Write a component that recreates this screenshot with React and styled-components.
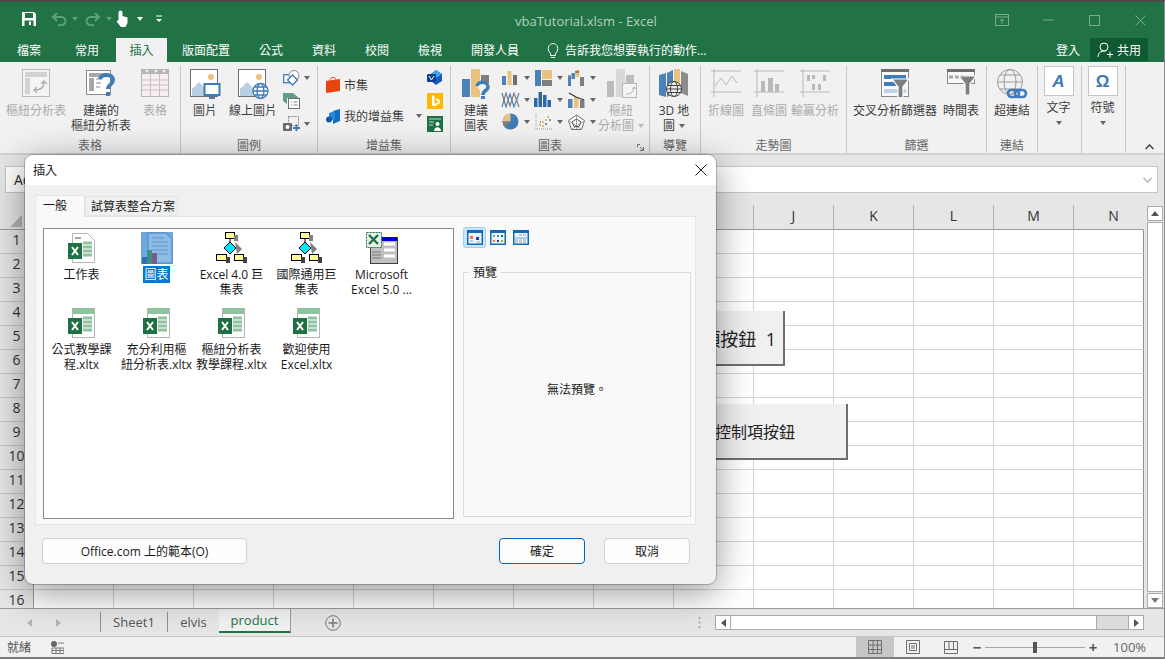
import styled, { createGlobalStyle } from "styled-components"

const GlobalStyle = createGlobalStyle`
    html, body { margin: 0; padding: 0; background: #fff; }
    * { box-sizing: border-box; }
    body { font-family: "Open Sans", "Noto Sans CJK TC", sans-serif; font-size: 12px; color: #262626; }
`

const Ico = ({ w, h = w, vw = w, vh = h, children }) => <svg width={w} height={h} viewBox={`0 0 ${vw} ${vh}`} preserveAspectRatio="none" style={{ display: 'block', flex: 'none' }}>{children}</svg>

/* ---------- ribbon icons ---------- */
const PivotIco = () => <Ico w={28}>
    <rect x=".5" y=".5" width="27" height="27" fill="#f4f4f4" stroke="#b9b9b9" />
    <rect x="3" y="3" width="22" height="5" fill="#d2d2d2" /><rect x="3" y="9" width="5" height="16" fill="#d2d2d2" />
    <path d="M13 21c6 0 9-3 9-8M19 15l3-3 3 3M15 18l-3 3 3 3" fill="none" stroke="#b0b0b0" strokeWidth="1.4" />
</Ico>
const SuggestPivotIco = () => <Ico w={30}>
    <rect x=".5" y="1.5" width="24" height="24" fill="#fff" stroke="#8a8a8a" />
    <rect x="3" y="4" width="19" height="4" fill="#a6a6a6" /><rect x="3" y="9" width="5" height="13" fill="#a6a6a6" />
    <path d="M10 10h6M10 14h5M10 18h4" stroke="#c4c4c4" strokeWidth="2" />
    <path d="M14 10c1-5 13-6 13 1 0 5-5 4-5 9" fill="none" stroke="#3f7cb8" strokeWidth="4" />
    <rect x="20" y="23" width="4" height="4" fill="#3f7cb8" />
</Ico>
const TableIco = () => <Ico w={28}>
    <rect x=".5" y=".5" width="27" height="27" fill="#f6eef2" stroke="#b9b4b7" />
    <rect x="0" y="0" width="28" height="5" fill="#b5b5b5" />
    <path d="M1 11h26M1 16h26M1 21h26M9.5 5v22M18.5 5v22" stroke="#c9bfc5" />
    <path d="M4 1l2 3 2-3zM13 1l2 3 2-3zM21 1l2 3 2-3z" fill="#eee" />
</Ico>
const PictureIco = ({ badge }) => <Ico w={31} h={32}>
    <rect x=".5" y=".5" width="27" height="27" fill="#fff" stroke="#6f6f6f" />
    <circle cx="21" cy="8" r="3" fill="#edc07c" />
    <path d="M2 27V20l7-7 7 7 5 7z" fill="#b8cfe4" />
    {badge === 'screen' && <g><rect x="14.5" y="15" width="15" height="11" fill="#fff" stroke="#3f7cb8" strokeWidth="2" /><path d="M19 29h6" stroke="#3f7cb8" strokeWidth="2" /></g>}
    {badge === 'globe' && <g fill="#fff" stroke="#3f7cb8" strokeWidth="1.3"><circle cx="22.5" cy="22" r="7.5" /><ellipse cx="22.5" cy="22" rx="3.4" ry="7.5" /><path d="M15 22h15M16 18h13M16 26h13" /></g>}
</Ico>
const ShapesIco = () => <Ico w={17} h={16} vw={17} vh={16}>
    <rect x=".7" y="4.700" width="10" height="8" fill="#fff" stroke="#3f7cb8" strokeWidth="1.3" />
    <circle cx="11" cy="5.500" r="5" fill="#fff" stroke="#8a8a8a" />
    <path d="M4.500 10l5-5 5 5-5 5z" fill="#fff" stroke="#3f7cb8" strokeWidth="1.3" />
</Ico>
const SmartArtIco = () => <Ico w={17} h={17}>
    <path d="M0 1h10l6 5H4v6l-4-3z" fill="#5f9e85" />
    <rect x="5.500" y="6.500" width="11" height="10" fill="#fff" stroke="#707070" />
    <path d="M8 10h1M10.500 10h4M8 13h1M10.500 13h4" stroke="#808080" />
</Ico>
const ScreenshotIco = () => <Ico w={17} h={15}>
    <rect x="5.500" y=".5" width="10" height="9" fill="none" stroke="#8a8a8a" strokeDasharray="2 1" />
    <rect x="0" y="7" width="9" height="8" rx="1" fill="#6b6b6b" /><circle cx="4.500" cy="11" r="2" fill="#fff" />
    <path d="M10 12h7M13.500 8.500v6.500" stroke="#3f7cb8" strokeWidth="2" />
</Ico>
const StoreIco = () => <Ico w={15} h={16}>
    <path d="M0 4l14-2v12L0 16z" fill="#e8440f" /><path d="M4 4c0-5 6-5 6 0" fill="none" stroke="#e8440f" />
</Ico>
const AddinIco = () => <Ico w={15} h={15}>
    <path d="M7 2l7-2v12l-7 3z" fill="#0f6fc6" /><path d="M3 4l6-2v9H3z" fill="#2b88d8" /><circle cx="3" cy="10.5" r="3" fill="#0f5aa8" />
</Ico>
const VisioIco = () => <Ico w={16} h={15}>
    <path d="M9 0l6 4v7l-6 4-5-4V4z" fill="#185abd" /><path d="M9 0l6 4-6 4-5-4z" fill="#41a5ee" />
    <rect x="0" y="4" width="9" height="8" rx="1" fill="#103f91" /><path d="M2 6l2.4 4L7 6" fill="none" stroke="#fff" />
</Ico>
const BingIco = () => <Ico w={16} h={16}>
    <rect width="16" height="16" fill="#ffb900" />
    <path d="M5 2l2.6 1v8l4-2-2-1-1-3 4.4 2v3l-5.4 3.4L5 12z" fill="#fff" />
</Ico>
const PeopleIco = () => <Ico w={16} h={16}>
    <rect width="16" height="16" fill="#1e7145" /><path d="M2 3h12M2 6h5M2 9h4" stroke="#bcdccb" />
    <circle cx="10.5" cy="8" r="2" fill="#fff" /><path d="M7 15c0-5 7-5 7 0z" fill="#fff" />
</Ico>
const SuggestChartIco = () => <Ico w={28} h={30}>
    <rect x="0" y="10" width="8" height="18" fill="#4d82b8" /><rect x="9" y="0" width="9" height="28" fill="#e9c27f" />
    <rect x="19" y="6" width="8" height="8" fill="#7f7f7f" />
    <path d="M15 17c1-5 11-5 11 1 0 4-5 3-5 8" fill="#f1f1f1" stroke="#3f7cb8" strokeWidth="3.5" />
    <rect x="19" y="27" width="4" height="3" fill="#3f7cb8" />
</Ico>
const Bars = ({ a = '#4d82b8', b = '#e9c27f', c = '#6e6e6e' }) => <Ico w={18} h={15}>
    <rect x="1" y="6" width="4" height="9" fill={a} /><rect x="6.5" y="1" width="4" height="14" fill={b} /><rect x="12" y="5" width="4" height="10" fill={c} />
</Ico>
const Treemap = () => <Ico w={17} h={16}>
    <rect y="0" width="6" height="16" fill="#4d82b8" /><rect x="7" width="10" height="9" fill="#e9c27f" /><rect x="7" y="10" width="10" height="6" fill="#7f7f7f" />
</Ico>
const Waterfall = () => <Ico w={17} h={16}>
    <rect y="7" width="3" height="9" fill="#4d82b8" /><rect x="3.500" y="3" width="3.500" height="6" fill="#4d82b8" /><rect x="7.500" y="0" width="4" height="7" fill="#e9c27f" /><rect x="12" y="7" width="4" height="9" fill="#7f7f7f" />
    <path d="M0 6h3M7 2h4" stroke="#333" />
</Ico>
const LineChart = () => <Ico w={19} h={16}>
    <path d="M1 1l4 14 4-13 4 13 5-14" fill="none" stroke="#4d82b8" strokeWidth="1.2" />
    <path d="M1 15l4-14 4 13 4-13 5 14" fill="none" stroke="#7f7f7f" strokeWidth="1.2" />
</Ico>
const Histogram = () => <Ico w={18} h={15}>
    <rect y="6" width="3.5" height="9" fill="#2f68a5" /><rect x="4.5" y="0" width="3.5" height="15" fill="#2f68a5" /><rect x="9" y="3" width="3.5" height="12" fill="#2f68a5" /><rect x="13.5" y="8" width="3.5" height="7" fill="#2f68a5" />
</Ico>
const Combo = () => <Ico w={17} h={16}>
    <rect x="0" y="7" width="4.500" height="9" fill="#4d82b8" /><rect x="6" y="5" width="4.500" height="11" fill="#e9c27f" /><rect x="12" y="8" width="4.500" height="8" fill="#7f7f7f" />
    <path d="M1 1l7 4 8 3" fill="none" stroke="#333" strokeWidth="1.2" />
</Ico>
const Pie = () => <Ico w={17} h={17}>
    <circle cx="8.5" cy="8.5" r="8" fill="#3f7cb8" /><path d="M8.5 8.5V.5a8 8 0 0 0-8 8z" fill="#e9c27f" /><path d="M8.5 8.5H.5a8 8 0 0 0 3 6z" fill="#7f7f7f" />
</Ico>
const Scatter = () => <Ico w={17} h={16}>
    <path d="M1 0v15h16" fill="none" stroke="#9a9a9a" strokeDasharray="1 1" />
    <path d="M4 11h2M7 8h2M10 6h2M7 12h2M12 3h2" stroke="#e0a94c" strokeWidth="1.5" /><path d="M5 8h1M10 10h2M14 6h2" stroke="#3f7cb8" strokeWidth="1.5" />
</Ico>
const Radar = () => <Ico w={17} h={16}>
    <path d="M8.500 1l8 5.500-3 9h-10l-3-9z" fill="#fff" stroke="#6e6e6e" /><path d="M8.500 1v14M.5 6.500l13 9M16.500 6.500l-13 9" stroke="#a0a0a0" />
    <path d="M8.500 5l4.500 3-2 4.500H6L4 8z" fill="none" stroke="#555" />
</Ico>
const PivotChartIco = () => <Ico w={31}>
    <rect x="1" y="12" width="7" height="16" fill="#bcbcbc" /><rect x="10" y="0" width="9" height="28" fill="#d8d8d8" /><rect x="20" y="6" width="8" height="8" fill="#bcbcbc" />
    <rect x="16.5" y="14.5" width="14" height="14" fill="#f4f4f4" stroke="#b9b9b9" />
    <path d="M20 25c5 0 8-2 8-7M26 20l2-2 2 2" fill="none" stroke="#b0b0b0" />
</Ico>
const MapIco = () => <Ico w={30}>
    <path d="M0 6l7-2v24l-7-2z" fill="#4d82b8" /><path d="M8 4l6-3v24l-6 3z" fill="#4d82b8" /><path d="M15 0h6v24h-6z" fill="#e9c27f" /><path d="M22 2l7 3v22l-7-3z" fill="#8c8c8c" />
    <g fill="#f1f1f1" stroke="#404040"><circle cx="15" cy="20" r="7.5" /><ellipse cx="15" cy="20" rx="3.5" ry="7.5" /><path d="M8 20h14M9 16.5h12M9 23.5h12" /></g>
</Ico>
const SparkFrame = ({ children }) => <Ico w={31} h={28}>
    <path d="M3 0v28M0 2h30M0 23h30" stroke="#b9b9b9" />{children}
</Ico>
const FilterFunnel = ({ x, y }) => <g transform={`translate(${x} ${y})`}>
    <path d="M0 0h17l-6 8v11h-5V8z" fill="#7f7f7f" stroke="#fff" strokeWidth="1.2" />
</g>
const SlicerIco = () => <Ico w={28}>
    <rect x=".5" y=".5" width="27" height="27" fill="#f8f8f8" stroke="#8a8a8a" /><rect width="28" height="3" fill="#6e6e6e" />
    <rect x="3" y="6" width="22" height="4" fill="#3f7cb8" /><rect x="3" y="13" width="14" height="4" fill="#3f7cb8" /><rect x="3" y="20" width="22" height="4" fill="#bcd2e8" />
    <FilterFunnel x={11} y={10} />
</Ico>
const TimelineIco = () => <Ico w={29} h={26}>
    <rect x=".5" y=".5" width="27" height="14" fill="#f8f8f8" stroke="#8a8a8a" /><rect width="28" height="3" fill="#6e6e6e" />
    <path d="M2 8h4M8 8h4" stroke="#a6a6a6" strokeWidth="3" /><path d="M13 8h4" stroke="#3f7cb8" strokeWidth="3" /><path d="M19 8h3M23 8h3" stroke="#a6a6a6" strokeWidth="3" />
    <FilterFunnel x={12} y={7} />
</Ico>
const LinkIco = () => <Ico w={32} h={31}>
    <g fill="none" stroke="#9a9a9a"><circle cx="14" cy="13" r="12.5" /><ellipse cx="14" cy="13" rx="6" ry="12.5" /><path d="M2 13h24M4 6h20M4 20h20" /></g>
    <g fill="none" stroke="#3f7cb8" strokeWidth="2.6"><rect x="12" y="21" width="11" height="7" rx="3.5" /><rect x="19" y="21" width="11" height="7" rx="3.5" /></g>
</Ico>

/* ---------- dialog icons ---------- */
const XBlock = ({ x = 0, y = 10 }) => <g>
    <rect x={x} y={y} width="14" height="16" fill="#1e7145" />
    <path d={`M${x + 4} ${y + 4}l6 8m0-8l-6 8`} stroke="#fff" strokeWidth="2" />
</g>
const SheetFile = () => <Ico w={32}>
    <path d="M6.5 1.500h15l7 7v22h-22z" fill="#fff" stroke="#b5b5b5" />
    <path d="M9 6h6" stroke="#a6a6a6" strokeWidth="2" />
    <path d="M17 11h9M17 15h9M17 19h9M17 23h9" stroke="#8fc3a0" strokeWidth="3" />
    <XBlock x={2} y={11} />
</Ico>
const TemplateFile = () => <Ico w={32}>
    <rect x="6.500" y="1.500" width="22" height="29" fill="#fff" stroke="#b5b5b5" />
    <rect x="7" y="1" width="21" height="6" fill="#8fc3a0" />
    <path d="M17 11h9M17 15h9M17 19h9M17 23h9" stroke="#8fc3a0" strokeWidth="3" />
    <XBlock x={2} y={11} />
</Ico>
const ChartFile = () => <Ico w={32}>
    <rect width="32" height="32" fill="#6ea8dc" />
    <path d="M7 1h18l6 6v24H7z" fill="#8cbbe6" stroke="#4c86bd" />
    <path d="M11 6h12M11 10h16M11 14h16M11 18h16M16 22h11" stroke="#5f97cc" />
    <rect x="1" y="25" width="5" height="7" fill="#2f6fb0" /><rect x="6" y="18" width="5" height="14" fill="#3f8f86" /><rect x="11" y="21" width="5" height="11" fill="#7c5b86" />
</Ico>
const MacroFile = () => <Ico w={32}>
    <rect x="9.500" y=".5" width="9" height="6" fill="#ffff99" stroke="#000" /><rect x="18" y="3" width="4" height="6" fill="#808080" />
    <path d="M14 7v3" stroke="#000" />
    <path d="M14 10l6 6-6 6-6-6z" fill="#00e5ff" stroke="#000" /><path d="M19 10l7 7-5 5-1-6z" fill="#808080" />
    <rect x=".5" y="22.500" width="10" height="6" fill="#ffff99" stroke="#000" /><rect x="10" y="25" width="4" height="6" fill="#404040" />
    <rect x="18.500" y="22.500" width="9" height="6" fill="#ffff99" stroke="#000" /><rect x="27" y="25" width="4" height="6" fill="#404040" />
</Ico>
const DialogFile = () => <Ico w={32}>
    <rect x="4.500" y="5.500" width="27" height="26" fill="#c0c0c0" stroke="#404040" />
    <rect x="5" y="5" width="26" height="4" fill="#0000e0" />
    <path d="M18 12h11M18 18h11M18 24h11" stroke="#fff" strokeWidth="3" />
    <path d="M6 20h9M6 23h9M6 26h9" stroke="#777" />
    <rect x=".5" y=".5" width="15" height="15" fill="#e8f0e8" stroke="#1e7145" strokeDasharray="2 1" />
    <path d="M3 3l9 9m0-9l-9 9" stroke="#1e7145" strokeWidth="2.4" />
</Ico>
const ViewIco = ({ children }) => <Ico w={16} h={15}>
    <rect x=".75" y=".75" width="14.500" height="13.500" fill="#eef4fb" stroke="#0f6cbd" strokeWidth="1.500" /><rect width="16" height="3" fill="#0f6cbd" />{children}
</Ico>

/* ---------- data ---------- */
const ribbonTabs = [['檔案', 58], ['常用', 58], ['插入', 51, true], ['版面配置', 78], ['公式', 52], ['資料', 54], ['校閱', 52], ['檢視', 54], ['開發人員', 76]]
// the dialog covers the headers up to column I, only the rest shows a letter
const columns = ['', '', '', '', '', '', '', '', '', '', 'J', 'K', 'L', 'M', 'N']
const rows = Array.from({ length: 16 }, (_, i) => i + 1)
const chartIcons = [Bars, Treemap, Waterfall, LineChart, Histogram, Combo, Pie, Scatter, Radar]
const templates = [
    { icon: SheetFile, label: '工作表' },
    { icon: ChartFile, label: '圖表', selected: true },
    { icon: MacroFile, label: 'Excel 4.0 巨\n集表' },
    { icon: MacroFile, label: '國際通用巨\n集表' },
    { icon: DialogFile, label: 'Microsoft\nExcel 5.0 ...' },
    { icon: TemplateFile, label: '公式教學課\n程.xltx' },
    { icon: TemplateFile, label: '充分利用樞\n紐分析表.xltx' },
    { icon: TemplateFile, label: '樞紐分析表\n教學課程.xltx' },
    { icon: TemplateFile, label: '歡迎使用\nExcel.xltx' },
]

export default function App() {
    return (
        <Window>
            <GlobalStyle />
            <TitleBar>
                <Qat>
                    <QatItem $left={21}><Ico w={16}><path d="M1 1h12l2 2v12H1z" fill="#fff" /><rect x="4" y="2" width="8" height="5" fill="#217346" /><rect x="3.500" y="9.500" width="9" height="5.500" fill="#217346" /><rect x="8" y="10.500" width="2" height="3.500" fill="#fff" /></Ico></QatItem>
                    <QatItem $left={14}><Ico w={16}><path d="M6 2L2 6l4 4M2 6h8c6 0 6 8 0 8H7" fill="none" stroke="#5f9e7c" strokeWidth="2" /></Ico></QatItem>
                    <QatItem $left={5}><MiniCaret $left={0} $color="#5f9e7c" /></QatItem>
                    <QatItem $left={7}><Ico w={16}><path d="M10 2l4 4-4 4M14 6H6c-6 0-6 8 0 8h3" fill="none" stroke="#5f9e7c" strokeWidth="2" /></Ico></QatItem>
                    <QatItem $left={5}><MiniCaret $left={0} $color="#5f9e7c" /></QatItem>
                    <QatItem $left={3}><Ico w={15} h={18}><path d="M3.500 7V2.500a2 2 0 0 1 4 0V6l5 1.500V13l-2 4H6L1.500 11.500 3.500 10z" fill="#fff" /></Ico></QatItem>
                    <QatItem $left={7}><MiniCaret $left={0} $color="#fff" /></QatItem>
                    <QatItem $left={12}><Ico w={8} h={10}><path d="M1 2h6" stroke="#fff" /><path d="M1 5h6l-3 3z" fill="#fff" /></Ico></QatItem>
                </Qat>
                <DocTitle>vbaTutorial.xlsm - Excel</DocTitle>
                <WinControls>
                    <WinBtn><Ico w={14} h={12}><rect x=".5" y=".5" width="13" height="11" fill="none" stroke="#7aa98f" /><path d="M1 3h12M7 10V5M5 7l2-2 2 2" fill="none" stroke="#7aa98f" /></Ico></WinBtn>
                    <WinBtn><Ico w={11} h={2}><path d="M0 1h11" stroke="#7aa98f" /></Ico></WinBtn>
                    <WinBtn><Ico w={11}><rect x=".5" y=".5" width="10" height="10" fill="none" stroke="#7aa98f" /></Ico></WinBtn>
                    <WinBtn><Ico w={11}><path d="M.5.500l10 10m0-10l-10 10" stroke="#7aa98f" /></Ico></WinBtn>
                </WinControls>
            </TitleBar>

            <TabBar>
                {ribbonTabs.map(([name, w, active]) => <TabItem key={name} $w={w} $active={active}>{name}</TabItem>)}
                <TellMe>
                    <Ico w={12} h={15}><path d="M3.500 10.500C-1 6 2 .5 6 .5s7 5.500 2.500 10v2h-5zM4 14.500h4" fill="none" stroke="#fff" /></Ico>
                    <span>告訴我您想要執行的動作...</span>
                </TellMe>
                <SignIn>登入</SignIn>
                <ShareBtn>
                    <Ico w={16} h={16}><circle cx="7" cy="5" r="4" fill="none" stroke="#fff" /><path d="M1 15c0-7 8-6 8-6M10 12.500h6M13 9.500v6" fill="none" stroke="#fff" /></Ico>
                    共用
                </ShareBtn>
            </TabBar>

            <Ribbon>
                <Group $w={181} label="表格">
                    <Spacer $w={6} />
                    <RBtn $w={60} $off><IconSlot><PivotIco /></IconSlot>樞紐分析表</RBtn>
                    <RBtn $w={70}><IconSlot><SuggestPivotIco /></IconSlot>建議的<br />樞紐分析表</RBtn>
                    <RBtn $w={38} $off><IconSlot><TableIco /></IconSlot>表格</RBtn>
                </Group>
                <Group $w={137} label="圖例">
                    <RBtn $w={48}><IconSlot><PictureIco badge="screen" /></IconSlot>圖片</RBtn>
                    <RBtn $w={48}><IconSlot><PictureIco badge="globe" /></IconSlot>線上圖片</RBtn>
                    <SmallCol $left={6}>
                        <SmallRow><ShapesIco /><MiniCaret /></SmallRow>
                        <SmallRow><SmartArtIco /></SmallRow>
                        <SmallRow><ScreenshotIco /><MiniCaret /></SmallRow>
                    </SmallCol>
                </Group>
                <Group $w={133} label="增益集">
                    <Spacer $w={8} />
                    <AddinCol>
                        <AddinRow><StoreIco />市集</AddinRow>
                        <AddinRow><AddinIco />我的增益集<MiniCaret $left={9} /></AddinRow>
                    </AddinCol>
                    <SmallCol $left={0}>
                        <SmallRow><VisioIco /></SmallRow>
                        <SmallRow><BingIco /></SmallRow>
                        <SmallRow><PeopleIco /></SmallRow>
                    </SmallCol>
                </Group>
                <Group $w={199} label="圖表" launcher>
                    <RBtn $w={50}><IconSlot><SuggestChartIco /></IconSlot>建議<br />圖表</RBtn>
                    <ChartGrid>
                        {chartIcons.map((Chart, i) => <SmallRow key={i}><ChartSlot><Chart /></ChartSlot><MiniCaret /></SmallRow>)}
                    </ChartGrid>
                    <RBtn $w={42} $off><IconSlot><PivotChartIco /></IconSlot>樞紐<br /><Nowrap>分析圖<MiniCaret $color="#bdbdbd" /></Nowrap></RBtn>
                </Group>
                <Group $w={51} label="導覽">
                    <RBtn $w={48}><IconSlot><MapIco /></IconSlot>3D 地<br /><Nowrap>圖<MiniCaret /></Nowrap></RBtn>
                </Group>
                <Group $w={146} label="走勢圖">
                    <Spacer $w={7} />
                    <RBtn $w={36} $off><IconSlot><SparkFrame><path d="M4 17l6-8 5 7 6-9 5 7" fill="none" stroke="#b9b9b9" /></SparkFrame></IconSlot>折線圖</RBtn>
                    <Spacer $w={7} />
                    <RBtn $w={36} $off><IconSlot><SparkFrame><path d="M7 23V12h4v11zM14 23V9h5v14zM21 23V15h4v8z" fill="#b9b9b9" /></SparkFrame></IconSlot>直條圖</RBtn>
                    <Spacer $w={4} />
                    <RBtn $w={48} $off><IconSlot><SparkFrame><path d="M7 6h3v6H7zM12 6h3v4h-3zM23 6h3v6h-3zM12 15h3v6h-3zM18 15h3v6h-3z" fill="#b9b9b9" /></SparkFrame></IconSlot>輸贏分析</RBtn>
                </Group>
                <Group $w={140} label="篩選">
                    <Spacer $w={6} />
                    <RBtn $w={84}><IconSlot><SlicerIco /></IconSlot>交叉分析篩選器</RBtn>
                    <Spacer $w={6} />
                    <RBtn $w={36}><IconSlot><TimelineIco /></IconSlot>時間表</RBtn>
                </Group>
                <Group $w={51} label="連結">
                    <RBtn $w={50}><IconSlot><LinkIco /></IconSlot>超連結</RBtn>
                </Group>
                <Group $w={44} label="">
                    <BoxBtn><BoxGlyph $italic>A</BoxGlyph>文字<MiniCaret $left={0} $top={6} /></BoxBtn>
                </Group>
                <Group $w={44} label="">
                    <BoxBtn><BoxGlyph>Ω</BoxGlyph>符號<MiniCaret $left={0} $top={6} /></BoxBtn>
                </Group>
                <Collapse><Ico w={9} h={6}><path d="M.5 5L4.500 1l4 4" fill="none" stroke="#444" strokeWidth="1.500" /></Ico></Collapse>
            </Ribbon>

            <FormulaBar>
                <FormulaInput>
                    <span>Ac</span>
                    <Ico w={9} h={6}><path d="M.5 1l4 4 4-4" fill="none" stroke="#b5b5b5" strokeWidth="1.500" /></Ico>
                </FormulaInput>
            </FormulaBar>

            <SheetArea>
                <Grid>
                    {columns.map((c, i) => <ColHead key={i} $last={i === 14}>{i === 0 ? <Corner /> : c}</ColHead>)}
                    {rows.map(r => columns.map((c, i) => i === 0
                        ? <RowHead key={`${r}-${i}`}>{r}</RowHead>
                        : <Cell key={`${r}-${i}`} $last={i === 14} />))}
                    <FormButton $w={185} $top={106} $h={55} $size={18} $pad={7}>控制項按鈕&nbsp;&nbsp;1</FormButton>
                    <FormButton $w={248} $top={199} $h={56} $size={16} $pad={51}>表單控制項按鈕</FormButton>
                </Grid>
                <VScroll>
                    <ScrollBtn><Ico w={8} h={5}><path d="M4 0l4 5H0z" fill="#555" /></Ico></ScrollBtn>
                    <ScrollThumb />
                    <ScrollBtn><Ico w={8} h={5}><path d="M0 0h8L4 5z" fill="#777" /></Ico></ScrollBtn>
                </VScroll>
            </SheetArea>

            <SheetBar>
                <SheetNav>
                    <Ico w={5} h={8}><path d="M5 0v8L0 4z" fill="#b5b5b5" /></Ico>
                    <Ico w={5} h={8}><path d="M0 0v8l5-4z" fill="#b5b5b5" /></Ico>
                </SheetNav>
                <SheetTab $w={67}>Sheet1</SheetTab>
                <SheetTab $w={52}>elvis</SheetTab>
                <SheetTab $w={72} $active>product</SheetTab>
                <AddSheet><Ico w={16}><circle cx="8" cy="8" r="7.300" fill="none" stroke="#777" /><path d="M8 3.500v9M3.500 8h9" stroke="#777" strokeWidth="1.500" /></Ico></AddSheet>
                <SplitDots><Ico w={3} h={11}><path d="M1.500 0v2M1.500 4.500v2M1.500 9v2" stroke="#a0a0a0" strokeWidth="1.500" /></Ico></SplitDots>
                <HScroll>
                    <HScrollBtn><Ico w={5} h={8}><path d="M5 0v8L0 4z" fill="#555" /></Ico></HScrollBtn>
                    <HThumb />
                    <HTrack />
                    <HScrollBtn><Ico w={5} h={8}><path d="M0 0v8l5-4z" fill="#555" /></Ico></HScrollBtn>
                </HScroll>
            </SheetBar>

            <StatusBar>
                <span>就緒</span>
                <MacroSlot><Ico w={13} h={13}><circle cx="3" cy="3" r="3" fill="#666" /><path d="M7 2h6M1 7h12v5.500H1zM1 9.500h12M5 7v6M9 7v6" fill="none" stroke="#777" /></Ico></MacroSlot>
                <ViewSwitch>
                    <ViewBtn $active><Ico w={14}><path d="M.5.500h13v13H.5zM.5 5h13M.5 9.500h13M5 .5v13M9.500.5v13" fill="none" stroke="#6f6f6f" /></Ico></ViewBtn>
                    <ViewBtn><Ico w={14}><path d="M.5.500h13v13H.5z" fill="none" stroke="#6f6f6f" /><path d="M3.500 3.500h7v7h-7zM5 6h4M5 8h4" fill="none" stroke="#6f6f6f" /></Ico></ViewBtn>
                    <ViewBtn><Ico w={14} h={13}><path d="M.5.500h13v12H.5zM.5 8.500h13M5 .5v8M9.500.5v8" fill="none" stroke="#6f6f6f" /></Ico></ViewBtn>
                </ViewSwitch>
                <Zoom>
                    <ZoomSign>−</ZoomSign>
                    <Slider><SliderThumb /></Slider>
                    <ZoomSign>+</ZoomSign>
                    <ZoomValue>100%</ZoomValue>
                </Zoom>
            </StatusBar>

            <Dialog>
                <DialogTitle>
                    <span>插入</span>
                    <Ico w={12}><path d="M.5.500l11 11m0-11l-11 11" stroke="#222" /></Ico>
                </DialogTitle>
                <DialogBody>
                    <DlgTabs>
                        <DlgTab $active $w={50}>一般</DlgTab>
                        <DlgTab $w={93}>試算表整合方案</DlgTab>
                    </DlgTabs>
                    <Panel>
                        <FileList>
                            {templates.map(t => (
                                <FileItem key={t.label}>
                                    <t.icon />
                                    <FileLabel $selected={t.selected}>{t.label}</FileLabel>
                                </FileItem>
                            ))}
                        </FileList>
                        <Side>
                            <ViewToggles>
                                <ViewToggle $active><ViewIco><rect x="3" y="6" width="3" height="3" fill="#f4724a" /><rect x="9" y="7" width="3" height="3" fill="#0f3fa8" /><path d="M3 11h3M10 12h3" stroke="#a0a0a0" /></ViewIco></ViewToggle>
                                <ViewToggle><ViewIco><path d="M3 5h2v2H3z" fill="#8f9bc4" /><path d="M7 5h2v2H7z" fill="#4d82b8" /><path d="M11 5h2v2h-2z" fill="#107c10" /><path d="M3 10h2v2H3z" fill="#f4724a" /><path d="M7 10h2v2H7z" fill="#0f3fa8" /><path d="M11 10h2v2h-2z" fill="#d8a000" /></ViewIco></ViewToggle>
                                <ViewToggle><ViewIco><path d="M6 5h3M10 5h3M2 8h12" stroke="#6ea8dc" /><path d="M2 10h3M6 10h3M10 10h3M2 12h3M6 12h3M10 12h3" stroke="#a0a0a0" /></ViewIco></ViewToggle>
                            </ViewToggles>
                            <Preview>
                                <PreviewLegend>預覽</PreviewLegend>
                                無法預覽。
                            </Preview>
                        </Side>
                    </Panel>
                    <DlgFooter>
                        <DlgButton $w={205}>Office.com 上的範本(O)</DlgButton>
                        <DlgButton $w={86} $primary $auto>確定</DlgButton>
                        <DlgButton $w={86}>取消</DlgButton>
                    </DlgFooter>
                </DialogBody>
            </Dialog>
        </Window>
    )
}

function Group({ $w, label, launcher, children }) {
    return (
        <GroupBox $w={$w}>
            <GroupBody>{children}</GroupBody>
            <GroupLabel>{label}</GroupLabel>
            {launcher && <Launcher><Ico w={7} h={7}><path d="M.5 3V.5H3M6.500 3v3.500H3M3 3l3 3" fill="none" stroke="#777" /></Ico></Launcher>}
        </GroupBox>
    )
}

const Window = styled.div`
    position: relative;
    width: 1165px;
    height: 659px;
    overflow: hidden;
    display: flex;
    flex-direction: column;
    background: #f1f1f1;
    border-top: 2px solid #4a4a4a;
    border-bottom: 2px solid #7d7d7d;
    border-right: 1px solid #8a8a8a;
`

const TitleBar = styled.div`
    position: relative;
    height: 36px;
    flex: none;
    display: flex;
    align-items: center;
    justify-content: space-between;
    background: #217346;
`

const Qat = styled.div`
    display: flex;
    align-items: center;
    margin-top: -2px;
`

const QatItem = styled.span`
    margin-left: ${p => p.$left}px;
`

const DocTitle = styled.div`
    position: absolute;
    left: 515px;
    top: 11px;
    font-size: 13px;
    line-height: 16px;
    color: #b4d0c0;
`

const WinControls = styled.div`
    display: flex;
    padding-right: 1px;
`

const WinBtn = styled.div`
    width: 46px;
    height: 32px;
    display: flex;
    align-items: center;
    justify-content: center;
`

const MiniCaret = styled.span`
    display: block;
    flex: none;
    width: 0;
    height: 0;
    margin-left: ${p => p.$left ?? 4}px;
    margin-top: ${p => p.$top ?? 0}px;
    border-left: 3.5px solid transparent;
    border-right: 3.5px solid transparent;
    border-top: 4px solid ${p => p.$color || '#666'};
`

const TabBar = styled.div`
    height: 24px;
    flex: none;
    display: flex;
    align-items: stretch;
    background: #217346;
    color: #fff;
`

const TabItem = styled.div`
    width: ${p => p.$w}px;
    flex: none;
    display: flex;
    align-items: center;
    justify-content: center;
    background: ${p => p.$active ? '#f1f1f1' : 'transparent'};
    color: ${p => p.$active ? '#217346' : '#fff'};
`

const TellMe = styled.div`
    display: flex;
    align-items: center;
    gap: 6px;
    margin-left: 14px;
`

const SignIn = styled.div`
    margin-left: auto;
    display: flex;
    align-items: center;
    margin-right: 10px;
`

const ShareBtn = styled.div`
    width: 58px;
    height: 23px;
    margin-right: 16px;
    display: flex;
    align-items: center;
    justify-content: center;
    gap: 4px;
    background: #0f5a32;
`

const Ribbon = styled.div`
    position: relative;
    height: 93px;
    flex: none;
    display: flex;
    padding-top: 4px;
    background: #f1f1f1;
    border-bottom: 2px solid #d2d2d2;
`

const GroupBox = styled.div`
    position: relative;
    width: ${p => p.$w}px;
    height: 87px;
    flex: none;
    display: flex;
    flex-direction: column;
    border-right: 1px solid #c8c8c8;
`

const GroupBody = styled.div`
    height: 72px;
    display: flex;
`

const GroupLabel = styled.div`
    height: 15px;
    line-height: 15px;
    text-align: center;
    color: #666;
`

const Launcher = styled.span`
    position: absolute;
    right: 5px;
    bottom: 2px;
`

const Spacer = styled.div`
    width: ${p => p.$w}px;
    flex: none;
`

const RBtn = styled.div`
    width: ${p => p.$w}px;
    flex: none;
    text-align: center;
    line-height: 15px;
    white-space: nowrap;
    display: flex;
    flex-direction: column;
    align-items: center;
    color: ${p => p.$off ? '#ababab' : '#3c3c3c'};
`

const IconSlot = styled.div`
    height: 34px;
    margin-top: 3px;
    flex: none;
`

const Nowrap = styled.span`
    display: inline-flex;
    align-items: center;
`

const SmallCol = styled.div`
    margin-left: ${p => p.$left}px;
    display: flex;
    flex-direction: column;
`

const SmallRow = styled.div`
    height: 23px;
    display: flex;
    align-items: center;
`

const ChartSlot = styled.div`
    width: 20px;
    margin-left: -1px;
    display: flex;
    justify-content: center;
`

const AddinCol = styled.div`
    width: 101px;
    display: flex;
    flex-direction: column;
    gap: 7px;
    padding-top: 7px;
    color: #3c3c3c;
`

const AddinRow = styled.div`
    height: 24px;
    display: flex;
    align-items: center;
    gap: 3px;
    white-space: nowrap;
`

const ChartGrid = styled.div`
    display: grid;
    grid-template-columns: repeat(3, 33px);
    grid-auto-rows: 22px;
    width: 99px;
    flex: none;
`

const BoxBtn = styled.div`
    width: 43px;
    display: flex;
    flex-direction: column;
    align-items: center;
    line-height: 15px;
    color: #3c3c3c;
    padding-right: 2px;
`

const BoxGlyph = styled.div`
    width: 30px;
    height: 30px;
    margin-bottom: 4px;
    display: flex;
    align-items: center;
    justify-content: center;
    background: #fff;
    border: 1px solid #c6c6c6;
    color: #3f7cb8;
    font-family: "Liberation Sans", sans-serif;
    font-weight: 700;
    font-size: 17px;
    font-style: ${p => p.$italic ? 'italic' : 'normal'};
`

const Collapse = styled.span`
    position: absolute;
    left: 1145px;
    top: 82px;
`

const FormulaBar = styled.div`
    height: 50px;
    flex: none;
    padding: 11px 6px 12px 5px;
    background: #e6e6e6;
`

const FormulaInput = styled.div`
    height: 27px;
    display: flex;
    align-items: center;
    justify-content: space-between;
    padding: 0 5px 0 8px;
    background: #fff;
    border: 1px solid #c6c6c6;
    font-size: 14px;
`

const SheetArea = styled.div`
    height: 403px;
    flex: none;
    display: flex;
    background: #e6e6e6;
`

const Grid = styled.div`
    position: relative;
    width: 1144px;
    flex: none;
    display: grid;
    grid-template-columns: 34px repeat(13, 80px) 70px;
    grid-template-rows: 25px repeat(16, 24px);
    overflow: hidden;
    background: #fff;
`

const ColHead = styled.div`
    display: flex;
    align-items: center;
    justify-content: center;
    padding-bottom: 3px;
    padding-left: ${p => p.$last ? '10px' : '0'};
    background: #e6e6e6;
    border-bottom: 1px solid #9b9b9b;
    border-right: 1px solid ${p => p.$last ? '#e6e6e6' : '#b5b5b5'};
    font-size: 14px;
    color: #333;
`

const Corner = styled.span`
    width: 0;
    height: 0;
    margin: 11px 0 0 -1px;
    border-bottom: 12px solid #b4b4b4;
    border-left: 12px solid transparent;
`

const RowHead = styled.div`
    display: flex;
    align-items: center;
    justify-content: center;
    padding-bottom: 3px;
    background: #e6e6e6;
    border-right: 1px solid #9b9b9b;
    border-bottom: 1px solid #c6c6c6;
    font-size: 14px;
    line-height: 18px;
    color: #333;
`

const Cell = styled.div`
    border-right: 1px solid ${p => p.$last ? '#8f8f8f' : '#d4d4d4'};
    border-bottom: 1px solid #d4d4d4;
`

const FormButton = styled.div`
    position: absolute;
    left: 600px;
    top: ${p => p.$top}px;
    width: ${p => p.$w}px;
    height: ${p => p.$h}px;
    display: flex;
    align-items: center;
    justify-content: flex-end;
    padding-right: ${p => p.$pad}px;
    background: #f0f0f0;
    border-right: 2px solid #6f6f6f;
    border-bottom: 2px solid #6f6f6f;
    font-size: ${p => p.$size}px;
    white-space: nowrap;
    color: #222;
`

const VScroll = styled.div`
    width: 16px;
    margin: 1px 0 0 3px;
    display: flex;
    flex-direction: column;
`

const ScrollBtn = styled.div`
    width: 16px;
    height: 15px;
    flex: none;
    display: flex;
    align-items: center;
    justify-content: center;
    background: #fff;
    border: 1px solid #ababab;
`

const ScrollThumb = styled.div`
    flex: 1;
    margin: 1px 0;
    background: #fff;
    border: 1px solid #ababab;
`

const SheetBar = styled.div`
    position: relative;
    height: 28px;
    flex: none;
    display: flex;
    background: #e6e6e6;
    border-top: 1px solid #9b9b9b;
`

const SheetNav = styled.div`
    width: 100px;
    display: flex;
    align-items: center;
    gap: 24px;
    padding-left: 27px;
`

const SheetTab = styled.div`
    width: ${p => p.$w}px;
    height: ${p => p.$active ? '25px' : '20px'};
    margin-top: ${p => p.$active ? '-1px' : '3px'};
    display: flex;
    align-items: center;
    justify-content: center;
    font-size: 13px;
    border-left: ${p => p.$active ? 'none' : '1px solid #8f8f8f'};
    background: ${p => p.$active ? '#f1f1f1' : 'transparent'};
    color: ${p => p.$active ? '#217346' : '#555'};
    font-weight: ${p => p.$active ? 500 : 400};
    ${p => p.$active && 'border-bottom: 2px solid #217346; border-top: 1px solid #9b9b9b; border-right: 1px solid #9b9b9b;'}
`

const AddSheet = styled.div`
    margin-left: 34px;
    display: flex;
    align-items: center;
`

const SplitDots = styled.div`
    margin-left: 357px;
    display: flex;
    align-items: center;
`

const HScroll = styled.div`
    position: absolute;
    left: 715px;
    top: 6px;
    width: 429px;
    height: 15px;
    display: flex;
    border: 1px solid #ababab;
    background: #fff;
`

const HScrollBtn = styled.div`
    width: 14px;
    flex: none;
    display: flex;
    align-items: center;
    justify-content: center;
    background: #fff;
`

const HThumb = styled.div`
    width: 367px;
    flex: none;
    background: #fff;
    border-left: 1px solid #ababab;
    border-right: 1px solid #ababab;
`

const HTrack = styled.div`
    flex: 1;
    background: #dbdbdb;
    border-right: 1px solid #ababab;
`

const StatusBar = styled.div`
    height: 21px;
    flex: none;
    display: flex;
    align-items: center;
    padding-left: 7px;
    background: #f1f1f1;
    border-top: 1px solid #c6c6c6;
    color: #555;
`

const MacroSlot = styled.div`
    margin-left: 20px;
`

const ViewSwitch = styled.div`
    margin-left: 792px;
    height: 100%;
    display: flex;
`

const ViewBtn = styled.div`
    width: 38px;
    display: flex;
    align-items: center;
    justify-content: center;
    background: ${p => p.$active ? '#c6c6c6' : 'transparent'};
`

const Zoom = styled.div`
    display: flex;
    align-items: center;
    margin-left: 1px;
    gap: 2px;
`

const ZoomSign = styled.span`
    width: 12px;
    text-align: center;
    font-size: 15px;
    font-weight: 700;
    line-height: 15px;
    color: #555;
`

const Slider = styled.div`
    position: relative;
    width: 100px;
    height: 1px;
    background: #a6a6a6;
`

const SliderThumb = styled.div`
    position: absolute;
    left: 48px;
    top: -5px;
    width: 4px;
    height: 11px;
    background: #555;
`

const ZoomValue = styled.span`
    margin-left: 12px;
    font-size: 13px;
    color: #666;
`

const Dialog = styled.div`
    position: absolute;
    left: 25px;
    top: 153px;
    width: 691px;
    height: 429px;
    display: flex;
    flex-direction: column;
    overflow: hidden;
    border-radius: 8px;
    background: #f0f0f0;
    outline: 1px solid rgba(0, 0, 0, .22);
    box-shadow: 0 8px 36px rgba(0, 0, 0, .42);
    color: #1a1a1a;
`

const DialogTitle = styled.div`
    height: 30px;
    flex: none;
    display: flex;
    align-items: center;
    justify-content: space-between;
    padding: 0 9px 0 8px;
    background: #fff;
`

const DialogBody = styled.div`
    flex: 1;
    display: flex;
    flex-direction: column;
    padding: 9px 20px 0 10px;
`

const DlgTabs = styled.div`
    display: flex;
    align-items: flex-end;
    height: 22px;
    flex: none;
`

const DlgTab = styled.div`
    width: ${p => p.$w}px;
    height: ${p => p.$active ? '22px' : '20px'};
    padding: ${p => p.$active ? '0 0 3px 7px' : '0 0 0 5px'};
    margin-bottom: ${p => p.$active ? '-1px' : '0'};
    position: relative;
    z-index: ${p => p.$active ? 1 : 0};
    display: flex;
    align-items: center;
    background: ${p => p.$active ? '#f9f9f9' : '#f0f0f0'};
    border: 1px solid #e5e5e5;
    border-bottom: ${p => p.$active ? 'none' : '1px solid #e5e5e5'};
    border-radius: 2px 2px 0 0;
`

const Panel = styled.div`
    width: 661px;
    height: 309px;
    flex: none;
    display: flex;
    padding: 11px 3px 6px 7px;
    background: #f9f9f9;
    border: 1px solid #e5e5e5;
`

const FileList = styled.div`
    width: 411px;
    height: 291px;
    flex: none;
    display: grid;
    grid-template-columns: repeat(5, 75px);
    grid-auto-rows: 75px;
    align-content: start;
    padding-top: 3px;
    background: #fff;
    border: 1px solid #8a8a8a;
`

const FileItem = styled.div`
    display: flex;
    flex-direction: column;
    align-items: center;
    gap: 3px;
`

const FileLabel = styled.div`
    white-space: pre;
    text-align: center;
    line-height: 15px;
    padding: ${p => p.$selected ? '1px' : '0'};
    margin-top: ${p => p.$selected ? '-1px' : '0'};
    background: ${p => p.$selected ? '#0078d7' : 'transparent'};
    color: ${p => p.$selected ? '#fff' : '#1a1a1a'};
`

const Side = styled.div`
    width: 228px;
    flex: none;
    margin-left: 9px;
    margin-top: -2px;
    display: flex;
    flex-direction: column;
`

const ViewToggles = styled.div`
    display: flex;
    align-items: center;
    gap: 7px;
    height: 22px;
    margin-bottom: 24px;
`

const ViewToggle = styled.div`
    width: ${p => p.$active ? '23px' : '16px'};
    height: 21px;
    display: flex;
    align-items: center;
    justify-content: center;
    margin-right: ${p => p.$active ? '-3px' : '0'};
    border-radius: 3px;
    background: ${p => p.$active ? '#cce4f7' : 'transparent'};
    border: ${p => p.$active ? '1px solid #99d1ff' : 'none'};
`

const Preview = styled.div`
    position: relative;
    height: 245px;
    display: flex;
    align-items: center;
    justify-content: center;
    padding-bottom: 12px;
    border: 1px solid #dcdcdc;
`

const PreviewLegend = styled.span`
    position: absolute;
    left: 5px;
    top: -8px;
    padding: 0 4px;
    line-height: 15px;
    background: #f9f9f9;
`

const DlgFooter = styled.div`
    display: flex;
    gap: 19px;
    margin-top: 13px;
    padding: 0 6px 0 7px;
`

const DlgButton = styled.div`
    width: ${p => p.$w}px;
    height: 26px;
    margin-left: ${p => p.$auto ? 'auto' : '0'};
    display: flex;
    align-items: center;
    justify-content: center;
    background: #fdfdfd;
    border-radius: 4px;
    border: 1px solid ${p => p.$primary ? '#0067c0' : '#d0d0d0'};
    color: #1a1a1a;
`
